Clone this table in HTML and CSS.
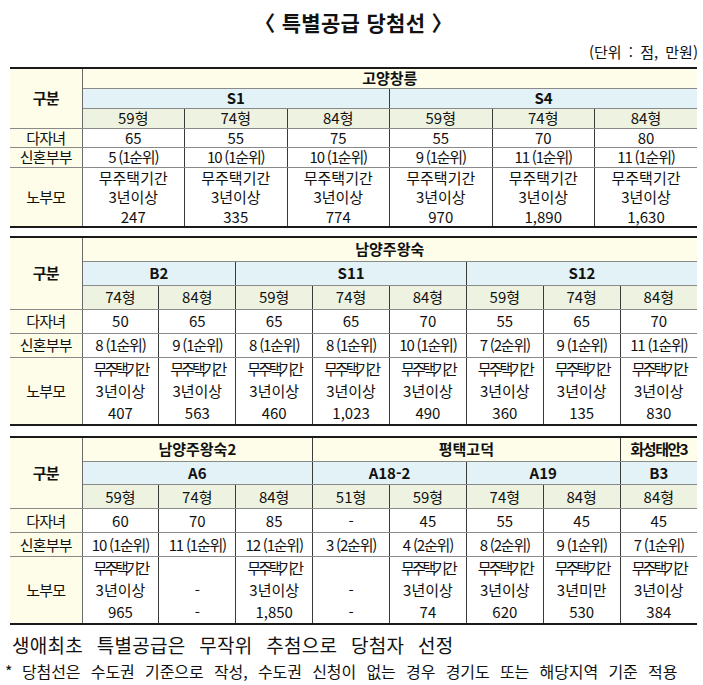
FILE: index.html
```html
<!DOCTYPE html>
<html lang="ko">
<head>
<meta charset="utf-8">
<link rel="stylesheet" href="styles.css">
</head>
<body>
<div class="wrap">
  <div class="title">〈 특별공급 당첨선 〉</div>
  <div class="unit">(단위 : 점, 만원)</div>

  <table class="tb t1">
    <colgroup><col class="c-label"><col span="6"></colgroup>
    <tr class="r1"><td class="lbl b" rowspan="3">구분</td><td class="hy b" colspan="6">고양창릉</td></tr>
    <tr class="r2"><td class="hb b" colspan="3">S1</td><td class="hb b" colspan="3">S4</td></tr>
    <tr class="r3"><td class="hg">59형</td><td class="hg">74형</td><td class="hg">84형</td><td class="hg">59형</td><td class="hg">74형</td><td class="hg">84형</td></tr>
    <tr class="r4"><td class="lbl">다자녀</td><td>65</td><td>55</td><td>75</td><td>55</td><td>70</td><td>80</td></tr>
    <tr class="r5"><td class="lbl">신혼부부</td><td class="nw">5 (1순위)</td><td class="nw">10 (1순위)</td><td class="nw">10 (1순위)</td><td class="nw">9 (1순위)</td><td class="nw">11 (1순위)</td><td class="nw">11 (1순위)</td></tr>
    <tr class="r6"><td class="lbl">노부모</td>
      <td><div class="ln">무주택기간</div><div class="ln">3년이상</div><div class="ln">247</div></td>
      <td><div class="ln">무주택기간</div><div class="ln">3년이상</div><div class="ln">335</div></td>
      <td><div class="ln">무주택기간</div><div class="ln">3년이상</div><div class="ln">774</div></td>
      <td><div class="ln">무주택기간</div><div class="ln">3년이상</div><div class="ln">970</div></td>
      <td><div class="ln">무주택기간</div><div class="ln">3년이상</div><div class="ln">1,890</div></td>
      <td><div class="ln">무주택기간</div><div class="ln">3년이상</div><div class="ln">1,630</div></td>
    </tr>
  </table>

  <table class="tb t2">
    <colgroup><col class="c-label"><col span="8"></colgroup>
    <tr class="r1"><td class="lbl b" rowspan="3">구분</td><td class="hy b" colspan="8">남양주왕숙</td></tr>
    <tr class="r2"><td class="hb b" colspan="2">B2</td><td class="hb b" colspan="3">S11</td><td class="hb b" colspan="3">S12</td></tr>
    <tr class="r3"><td class="hg">74형</td><td class="hg">84형</td><td class="hg">59형</td><td class="hg">74형</td><td class="hg">84형</td><td class="hg">59형</td><td class="hg">74형</td><td class="hg">84형</td></tr>
    <tr class="r4"><td class="lbl">다자녀</td><td>50</td><td>65</td><td>65</td><td>65</td><td>70</td><td>55</td><td>65</td><td>70</td></tr>
    <tr class="r5"><td class="lbl">신혼부부</td><td class="nw">8 (1순위)</td><td class="nw">9 (1순위)</td><td class="nw">8 (1순위)</td><td class="nw">8 (1순위)</td><td class="nw">10 (1순위)</td><td class="nw">7 (2순위)</td><td class="nw">9 (1순위)</td><td class="nw">11 (1순위)</td></tr>
    <tr class="r6"><td class="lbl">노부모</td>
      <td><div class="ln sq">무주택기간</div><div class="ln">3년이상</div><div class="ln">407</div></td>
      <td><div class="ln sq">무주택기간</div><div class="ln">3년이상</div><div class="ln">563</div></td>
      <td><div class="ln sq">무주택기간</div><div class="ln">3년이상</div><div class="ln">460</div></td>
      <td><div class="ln sq">무주택기간</div><div class="ln">3년이상</div><div class="ln">1,023</div></td>
      <td><div class="ln sq">무주택기간</div><div class="ln">3년이상</div><div class="ln">490</div></td>
      <td><div class="ln sq">무주택기간</div><div class="ln">3년이상</div><div class="ln">360</div></td>
      <td><div class="ln sq">무주택기간</div><div class="ln">3년이상</div><div class="ln">135</div></td>
      <td><div class="ln sq">무주택기간</div><div class="ln">3년이상</div><div class="ln">830</div></td>
    </tr>
  </table>

  <table class="tb t3">
    <colgroup><col class="c-label"><col span="8"></colgroup>
    <tr class="r1"><td class="lbl b" rowspan="3">구분</td><td class="hy b" colspan="3">남양주왕숙2</td><td class="hy b" colspan="4">평택고덕</td><td class="hy b sqh">화성태안3</td></tr>
    <tr class="r2"><td class="hb b" colspan="3">A6</td><td class="hb b" colspan="2">A18-2</td><td class="hb b" colspan="2">A19</td><td class="hb b">B3</td></tr>
    <tr class="r3"><td class="hg">59형</td><td class="hg">74형</td><td class="hg">84형</td><td class="hg">51형</td><td class="hg">59형</td><td class="hg">74형</td><td class="hg">84형</td><td class="hg">84형</td></tr>
    <tr class="r4"><td class="lbl">다자녀</td><td>60</td><td>70</td><td>85</td><td>-</td><td>45</td><td>55</td><td>45</td><td>45</td></tr>
    <tr class="r5"><td class="lbl">신혼부부</td><td class="nw">10 (1순위)</td><td class="nw">11 (1순위)</td><td class="nw">12 (1순위)</td><td class="nw">3 (2순위)</td><td class="nw">4 (2순위)</td><td class="nw">8 (2순위)</td><td class="nw">9 (1순위)</td><td class="nw">7 (1순위)</td></tr>
    <tr class="r6"><td class="lbl">노부모</td>
      <td><div class="ln sq">무주택기간</div><div class="ln">3년이상</div><div class="ln">965</div></td>
      <td><div class="ln">&nbsp;</div><div class="ln">-</div><div class="ln">-</div></td>
      <td><div class="ln sq">무주택기간</div><div class="ln">3년이상</div><div class="ln">1,850</div></td>
      <td><div class="ln">&nbsp;</div><div class="ln">-</div><div class="ln">-</div></td>
      <td><div class="ln sq">무주택기간</div><div class="ln">3년이상</div><div class="ln">74</div></td>
      <td><div class="ln sq">무주택기간</div><div class="ln">3년이상</div><div class="ln">620</div></td>
      <td><div class="ln sq">무주택기간</div><div class="ln">3년미만</div><div class="ln">530</div></td>
      <td><div class="ln sq">무주택기간</div><div class="ln">3년이상</div><div class="ln">384</div></td>
    </tr>
  </table>

  <p class="note1">생애최초 특별공급은 무작위 추첨으로 당첨자 선정</p>
  <p class="note2"><span class="star">*</span>당첨선은 수도권 기준으로 작성, 수도권 신청이 없는 경우 경기도 또는 해당지역 기준 적용</p>
</div>
</body>
</html>
```

FILE: styles.css
```css
* { box-sizing: border-box; }
html, body { margin: 0; padding: 0; background: #ffffff; }
body {
  font-family: "Noto Sans CJK KR", "Noto Sans", sans-serif;
  color: #111;
}
.wrap {
  width: 703px;
  padding: 0 6px 0 10px;
}
.title {
  height: 44px;
  line-height: 44px;
  text-align: center;
  font-size: 21px;
  font-weight: 700;
  letter-spacing: 0.3px;
}
.unit {
  height: 16px;
  line-height: 16px;
  text-align: right;
  font-size: 15px;
  word-spacing: 3px;
  margin-right: -1px;
}
.tb {
  width: 687px;
  border-collapse: collapse;
  table-layout: fixed;
  border-top: 2px solid #1a1a1a;
  border-bottom: 2px solid #1a1a1a;
  font-size: 15px;
}
.t1 { margin-top: 7px; }
.t2 { margin-top: 8px; }
.t3 { margin-top: 10px; }
.c-label { width: 72px; }
.tb td {
  padding: 0;
  text-align: center;
  vertical-align: middle;
  border: 1px solid #3a3a3a;
  border-top-color: #8a8a8a;
  border-bottom-color: #8a8a8a;
  line-height: 18px;
  white-space: nowrap;
  overflow: hidden;
}
.tb tr > td:last-child { border-right: none; }
.tb tr > td.lbl { border-left: none; border-right-color: #6a6a6a; letter-spacing: -0.8px; }
.tb .r1 td { border-top: 2px solid #1a1a1a; }
.tb .r6 td { border-bottom: 2px solid #1a1a1a; }
.b { font-weight: 700; }
.lbl { background: #fdfde9; }
.hy { background: #fdfde9; }
.hb { background: #e3f2f6; }
.hg { background: #eef3e1; }
.nw { letter-spacing: -1.2px; }
.ln { line-height: 19.5px; }
.sq { letter-spacing: -3px; }
.sqh { letter-spacing: -1.5px; }

.t1 .r1 { height: 20px; }
.t1 .r2 { height: 20px; }
.t1 .r3 { height: 20px; }
.t1 .r4 { height: 19px; }
.t1 .r5 { height: 20px; }
.t1 .r6 { height: 59px; }

.t2 .r1, .t2 .r2, .t2 .r3, .t2 .r4, .t2 .r5 { height: 24px; }
.t2 .r6 { height: 67px; }
.t2 .ln, .t3 .ln { line-height: 22px; }

.t3 .r1 { height: 25px; }
.t3 .r2 { height: 23px; }
.t3 .r3, .t3 .r4, .t3 .r5 { height: 24px; }
.t3 .r6 { height: 67px; }

.note1 {
  margin: 0;
  padding: 7px 0 0 2px;
  font-size: 19px;
  line-height: 25px;
  letter-spacing: 0.3px;
  word-spacing: 8px;
  white-space: nowrap;
}
.note2 {
  margin: 0;
  padding: 2px 0 0 0;
  margin-left: -5px;
  font-size: 16px;
  line-height: 24px;
  letter-spacing: -0.1px;
  word-spacing: 6px;
  white-space: nowrap;
}
.star { display: inline-block; width: 17px; }
```
